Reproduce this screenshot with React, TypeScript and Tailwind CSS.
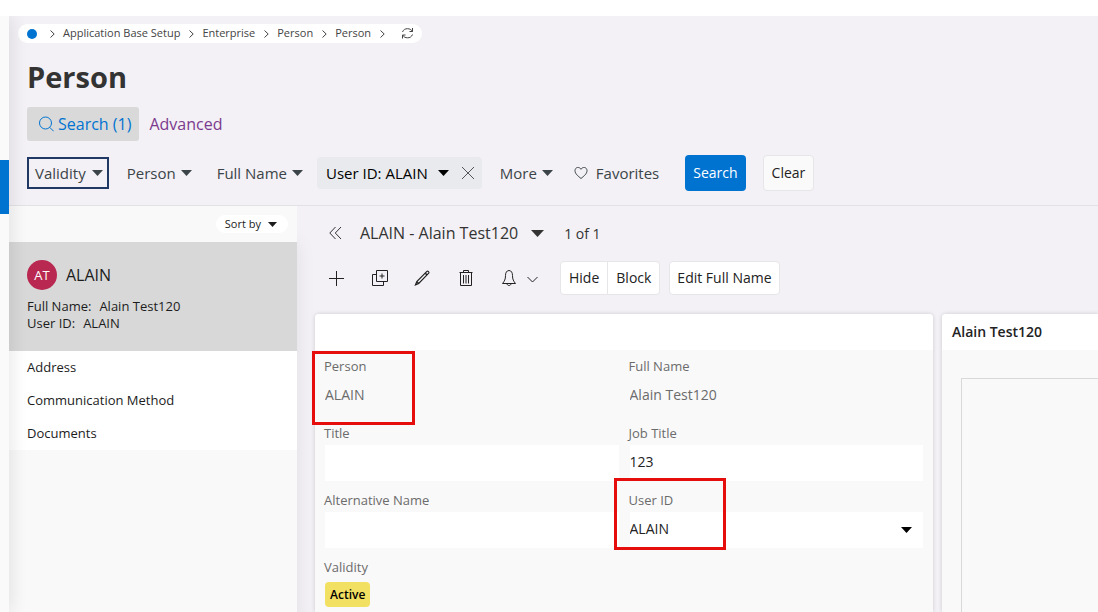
import type { ReactNode } from "react";

function Icon({ size = 18, children }: { size?: number; children: ReactNode }) {
  return (
    <svg
      width={size}
      height={size}
      viewBox={`0 0 ${size} ${size}`}
      fill="none"
      stroke="currentColor"
      className="shrink-0"
      aria-hidden="true"
    >
      {children}
    </svg>
  );
}

function Caret({ small = false }: { small?: boolean }) {
  return small ? (
    <svg width="9" height="5" viewBox="0 0 9 5" fill="currentColor" className="shrink-0" aria-hidden="true">
      <path d="M0 0h9L4.500 5z" />
    </svg>
  ) : (
    <svg width="11" height="6" viewBox="0 0 11 6" fill="currentColor" className="shrink-0" aria-hidden="true">
      <path d="M0 0h11L5.500 6z" />
    </svg>
  );
}

function Separator() {
  return (
    <svg width="5" height="8" viewBox="0 0 5 8" fill="none" stroke="currentColor" aria-hidden="true">
      <path d="M.5 .5 4.200 4 .5 7.500" />
    </svg>
  );
}

function Crumb({ label }: { label: string }) {
  return (
    <li className="flex items-center gap-2">
      <Separator />
      <a href="#">{label}</a>
    </li>
  );
}

function FilterButton({ label }: { label: string }) {
  return (
    <button type="button" aria-haspopup="listbox" className="flex h-8 items-center gap-[5px]">
      {label}
      <Caret />
    </button>
  );
}

function Field({ id, label, children }: { id: string; label: string; children: ReactNode }) {
  return (
    <div className="relative">
      <label htmlFor={id} className="-ml-px mb-[3px] block text-[13px] leading-[18px] text-[#6b6b6b]">
        {label}
      </label>
      {children}
    </div>
  );
}

const toolButton = "flex h-[34px] items-center border border-[#e6e5e8] bg-white pb-0.5 text-[14px] text-[#222]";
const fieldInput = "h-9 w-full pb-1 outline-none";

export default function App() {
  return (
    <div className="flex min-h-screen flex-col overflow-hidden bg-[#f3f1f5] font-['Open_Sans','Noto_Sans',sans-serif] text-[#333]">
      <div className="relative z-20 h-4 bg-white" />
      <div className="flex grow">
        <aside className="relative z-10 w-[9px] shrink-0 bg-[#fafafa] pt-36 shadow-[0_0_18px_rgba(0,0,0,0.16)]">
          <div className="h-[54px] bg-[#0073d1]" />
        </aside>

        <div className="flex min-w-0 grow flex-col">
          <header className="border-b border-[#e2e1e4] pl-[18px]">
            <nav aria-label="Breadcrumb" className="-ml-[9px] mt-2 flex h-[19px] w-fit items-center rounded-full bg-white pr-2 pl-[9px] text-[11px] text-[#444]">
              <span className="mr-[13px] size-[10px] rounded-full bg-[#0073d1]" />
              <ol className="flex items-center gap-[9px]">
                <Crumb label="Application Base Setup" />
                <Crumb label="Enterprise" />
                <Crumb label="Person" />
                <Crumb label="Person" />
                <li>
                  <Separator />
                </li>
              </ol>
              <button type="button" aria-label="Refresh" className="ml-4">
                <Icon size={13}>
                  <path d="M1.500 5C2.500 2.500 4.200 1.700 6.500 1.700 8.500 1.700 10.300 2.500 11.500 4.500M11.500 1v3.500H8.500M11.500 7.500C10.500 10 8.800 10.800 6.500 10.800 4.500 10.800 2.700 10 1.500 8M1.500 11.500V8H4.500" />
                </Icon>
              </button>
            </nav>

            <h1 className="mt-4 text-[29px] leading-9 font-bold">Person</h1>

            <div className="mt-3 flex items-center gap-[10px] text-[16px]">
              <button type="button" className="flex h-[34px] items-center gap-1 rounded-[3px] bg-[#d9d9d9] pr-2 pl-[11px] text-[#0073d1]">
                <Icon size={16}>
                  <circle cx="7.500" cy="7" r="6" />
                  <path d="m11.700 11.300 4 4" />
                </Icon>
                Search (1)
              </button>
              <a href="#" className="text-[#7b3a8e]">
                Advanced
              </a>
            </div>

            <div className="mt-[14px] mb-[14px] flex h-9 items-center text-[15px] text-[#3b4448]">
              <button type="button" aria-haspopup="listbox" className="flex h-8 items-center gap-1.5 border-2 border-[#1f3864] pr-1 pl-1.5">
                Validity
                <Caret />
              </button>
              <div className="ml-[18px] flex gap-[25px]">
                <FilterButton label="Person" />
                <FilterButton label="Full Name" />
              </div>
              <div className="ml-[14px] flex h-8 items-center rounded bg-[#e9eaed] pr-[7px] pl-[9px] text-black">
                <button type="button" aria-haspopup="listbox" className="flex items-center gap-[10px]">
                  User ID: ALAIN
                  <Caret />
                </button>
                <button type="button" aria-label="Remove filter" className="ml-3 text-[#555]">
                  <Icon size={14}>
                    <path d="m1 1 12 12M13 1 1 13" />
                  </Icon>
                </button>
              </div>
              <div className="ml-[18px]">
                <FilterButton label="More" />
              </div>
              <button type="button" className="ml-[21px] flex items-center gap-2">
                <Icon size={14}>
                  <path d="M7 12.500C4 10 1 7.800 1 4.600 1 1 5.500.4 7 3.300 8.500.4 13 1 13 4.600 13 7.800 10 10 7 12.500Z" />
                </Icon>
                Favorites
              </button>
              <button type="button" className="ml-[26px] h-9 rounded bg-[#0073d1] px-2 pb-0.5 text-[14px] text-white">
                Search
              </button>
              <button type="button" className="ml-[17px] h-9 rounded border border-[#e6e5e8] bg-[#fafafa] px-2 pb-0.5 text-[14px] text-[#222]">
                Clear
              </button>
            </div>
          </header>

          <div className="flex grow">
            <section className="w-72 shrink-0 bg-[#f9f9f9] text-[13px] text-[#1c1c1c] shadow-[0_36px_18px_rgba(0,0,0,0.08)]">
              <div className="flex h-9 items-center justify-end pr-[9px]">
                <button type="button" aria-haspopup="listbox" className="flex h-[18px] items-center gap-[7px] rounded-full bg-white pr-[11px] pl-[9px] text-[11px]">
                  Sort by
                  <Caret small />
                </button>
              </div>
              <div className="h-[109px] bg-[#d8d8d8] px-[18px] pt-[18px]">
                <div className="flex items-center gap-[9px] text-[16px] leading-5">
                  <span className="flex size-[30px] items-center justify-center rounded-full bg-[#b82850] text-[13px] text-white">AT</span>
                  ALAIN
                </div>
                <dl className="mt-2 leading-[17px]">
                  <div className="flex gap-2">
                    <dt>Full Name:</dt>
                    <dd>Alain Test120</dd>
                  </div>
                  <div className="flex gap-2">
                    <dt>User ID:</dt>
                    <dd>ALAIN</dd>
                  </div>
                </dl>
              </div>
              <ul className="bg-white px-[18px]">
                <li className="flex h-[33px] items-center"><a href="#">Address</a></li>
                <li className="flex h-[33px] items-center"><a href="#">Communication Method</a></li>
                <li className="flex h-[33px] items-center"><a href="#">Documents</a></li>
              </ul>
            </section>

            <main className="flex min-w-0 grow flex-col pl-[18px]">
              <div className="mt-[9px] flex h-9 items-center pl-[14px]">
                <button type="button" aria-label="Collapse list">
                  <Icon size={14}>
                    <path d="M6.500 1 .8 7l5.700 6M12 1 6.300 7l5.700 6" />
                  </Icon>
                </button>
                <button type="button" aria-haspopup="listbox" className="ml-[17px] flex items-center gap-[13px] text-[16px] font-medium">
                  ALAIN - Alain Test120
                  <svg width="13" height="7" viewBox="0 0 13 7" fill="currentColor" aria-hidden="true">
                    <path d="M0 0h13L6.500 7z" />
                  </svg>
                </button>
                <span className="ml-5 text-[14px] font-medium">1 of 1</span>
              </div>

              <div className="mt-[10px] flex h-[34px] items-center pl-3 text-[#222]">
                <button type="button" aria-label="New">
                  <Icon>
                    <path d="M2 9.500h15M9.500 2v15" />
                  </Icon>
                </button>
                <button type="button" aria-label="Duplicate" className="ml-[25px]">
                  <Icon>
                    <path d="M6.500 1.500h11v11h-11zM6.500 5.500h-4v11h11v-4M12 4.500v5M9.500 7h5" />
                  </Icon>
                </button>
                <button type="button" aria-label="Edit" className="ml-[26px]">
                  <Icon>
                    <path d="m1.500 15.800 1.300-3.300L12.900 2.400c1-.9 2.700.8 1.800 1.800L4.700 14.400zM2.800 12.500l1.900 1.900" strokeWidth="1.200" />
                    <path d="m11.300 4.200 1.800 1.800" strokeWidth="1.500" />
                  </Icon>
                </button>
                <button type="button" aria-label="Delete" className="ml-[25px]">
                  <Icon>
                    <path d="M2.500 3.500h13M6.500 3.500v-2h5v2M3.500 3.500v13h11v-13M6.500 6v8.500M9 6v8.500M11.500 6v8.500" />
                  </Icon>
                </button>
                <button type="button" aria-label="Notifications" aria-haspopup="menu" className="ml-[25px] flex items-center gap-[9px]">
                  <Icon>
                    <path d="M9 1.500C6.500 1.500 5.500 4 5.500 6.500c0 4-1 5.500-3 8h13c-2-2.500-3-4-3-8 0-2.500-1-5-3.500-5ZM7 14.500c0 2.700 4 2.700 4 0" />
                  </Icon>
                  <Icon size={11}>
                    <path d="m.5 4 5 5 5-5" />
                  </Icon>
                </button>
                <div className="ml-[22px] flex">
                  <button type="button" className={toolButton + " rounded-l px-2"}>Hide</button>
                  <button type="button" className={toolButton + " rounded-r border-l-0 px-2"}>Block</button>
                </div>
                <button type="button" className={toolButton + " ml-[9px] rounded px-[7px]"}>Edit Full Name</button>
              </div>

              <div className="mt-[19px] flex grow gap-[9px]">
                <section className="min-w-0 grow rounded-t bg-[#f9f9f9] shadow-[0_0_4px_rgba(0,0,0,0.16)]">
                  <div className="h-9 rounded-t bg-white" />
                  <form className="grid grid-cols-2 gap-x-[11px] gap-y-[10px] px-[10px] pt-[7px] pb-1 text-[14px]">
                    <Field id="person" label="Person">
                      <input id="person" readOnly defaultValue="ALAIN" className={fieldInput + " text-[#6b6b6b]"} />
                      <span className="pointer-events-none absolute -top-[6px] -left-[13px] h-[74px] w-[103px] border-3 border-[#e60d0d]" />
                    </Field>
                    <Field id="full-name" label="Full Name">
                      <input id="full-name" readOnly defaultValue="Alain Test120" className={fieldInput + " text-[#6b6b6b]"} />
                    </Field>
                    <Field id="title" label="Title">
                      <input id="title" className={fieldInput + " bg-white"} />
                    </Field>
                    <Field id="job-title" label="Job Title">
                      <input id="job-title" defaultValue="123" className={fieldInput + " bg-white text-[#222]"} />
                    </Field>
                    <Field id="alt-name" label="Alternative Name">
                      <input id="alt-name" className={fieldInput + " bg-white"} />
                    </Field>
                    <Field id="user-id" label="User ID">
                      <div className="relative">
                        <select id="user-id" className={fieldInput + " appearance-none bg-white text-[#222]"}>
                          <option>ALAIN</option>
                        </select>
                        <span className="pointer-events-none absolute inset-y-0 right-[11px] flex items-center text-black">
                          <Caret />
                        </span>
                      </div>
                      <span className="pointer-events-none absolute -top-[13px] -left-4 h-[72px] w-[112px] border-3 border-[#e60d0d]" />
                    </Field>
                    <div>
                      <div className="-ml-px mb-[6px] text-[13px] leading-[18px] text-[#6b6b6b]">Validity</div>
                      <span className="flex h-[25px] w-fit items-center rounded bg-[#f2e062] px-[5px] text-[12px] font-semibold text-black">Active</span>
                    </div>
                  </form>
                </section>

                <section className="flex w-[156px] shrink-0 flex-col rounded-tl bg-[#f9f9f9] shadow-[0_0_4px_rgba(0,0,0,0.16)]">
                  <h2 className="flex h-9 items-center rounded-tl bg-white pb-0.5 pl-[10px] text-[14px] font-semibold text-[#222]">Alain Test120</h2>
                  <div className="mt-7 ml-[19px] grow border-t border-l border-[#d9d9d9]" />
                </section>
              </div>
            </main>
          </div>
        </div>
      </div>
    </div>
  );
}
